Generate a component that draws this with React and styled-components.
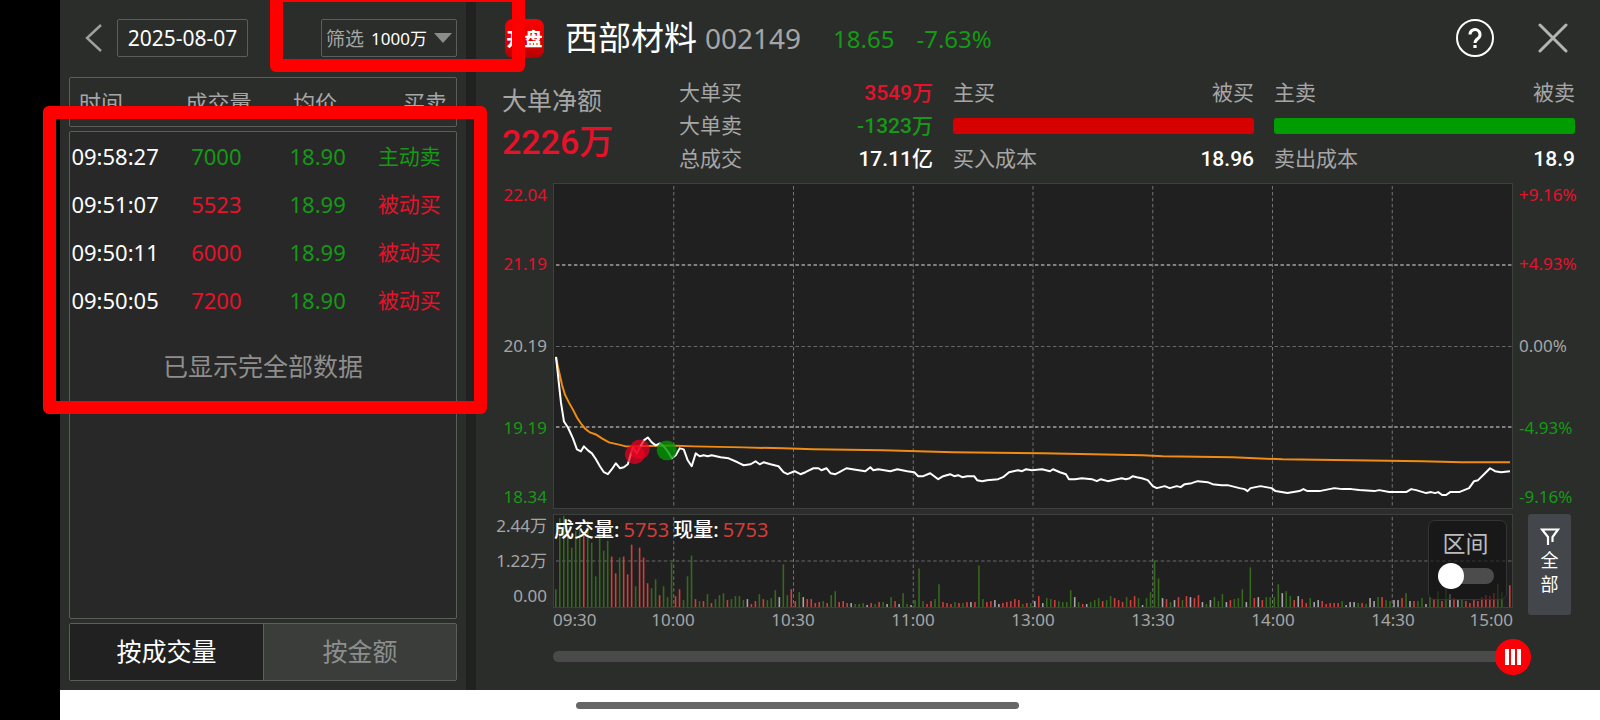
import React from "react";
import styled, { createGlobalStyle } from "styled-components";
import { useState } from "react";

const RED = "#e8112a";
const GREEN = "#149a14";
const GREY = "#a6a6a6";

const trades = [
  { time: "09:58:27", volume: "7000", price: "18.90", side: "主动卖", up: false },
  { time: "09:51:07", volume: "5523", price: "18.99", side: "被动买", up: true },
  { time: "09:50:11", volume: "6000", price: "18.99", side: "被动买", up: true },
  { time: "09:50:05", volume: "7200", price: "18.90", side: "被动买", up: true },
];

const priceTicks = [
  { price: "22.04", percent: "+9.16%", color: RED },
  { price: "21.19", percent: "+4.93%", color: RED },
  { price: "20.19", percent: "0.00%", color: GREY },
  { price: "19.19", percent: "-4.93%", color: GREEN },
  { price: "18.34", percent: "-9.16%", color: GREEN },
];

const timeTicks = [
  "09:30",
  "10:00",
  "10:30",
  "11:00",
  "13:00",
  "13:30",
  "14:00",
  "14:30",
  "15:00",
];

const gridX = [120, 240, 360, 480, 600, 720, 840];

// x,y pairs on a 960 x 326 canvas
const priceLine =
  "2,174 7,220 10,239 14,245 19,256 23,267 27,269 30,264 34,268 38,271 42,277 46,284 50,290 54,292 58,287 62,281 66,286 70,285 74,282 79,265 83,271 86,265 90,258 94,255 98,260 102,263 106,261 110,264 114,269 118,276 122,273 126,266 130,267 134,278 138,284 142,271 146,274 150,273 154,274 158,273 167,275 175,276 184,280 190,283 197,282 202,279 206,282 210,280 217,282 225,284 230,290 234,292 241,289 247,292 252,290 " +
  "254,289 260,286 265,286 268,288 273,286 277,291 282,292 286,290 293,286 299,287 312,289 317,285 320,288 325,287 337,289 344,287 354,289 361,290 365,294 370,294 377,291 381,294 385,297 390,294 397,292 401,294 405,293 409,295 414,294 421,294 424,298 429,299 434,298 445,297 450,295 456,290 465,288 469,289 473,287 479,288 489,287 497,289 500,287 507,290 513,292 516,297 522,297 529,296 539,297 544,299 548,297 555,299 564,297 569,296 573,297 577,296 580,294 584,295 589,296 595,298 600,304 604,306 612,304 617,306 624,304 628,305 632,302 639,301 " +
  "645,299 655,300 660,302 669,303 675,303 687,306 692,307 695,309 698,306 708,304 719,306 723,309 735,311 747,309 751,307 755,309 767,309 782,306 790,307 799,307 807,308 822,309 827,308 837,310 854,310 859,307 864,308 874,311 879,310 883,311 886,310 890,313 894,313 898,310 907,310 917,306 922,299 926,298 934,290 938,286 943,289 949,290 958,289";

const averageLine =
  "2,174 4,184 8,202 11,212 15,220 19,227 23,235 27,241 31,246 36,250 42,252 48,256 55,260 64,262 72,264 80,264 115,263 140,264 190,265 230,266 260,267 330,268 400,270 490,271 590,273 610,274 680,275 730,277 800,278 870,279 910,280 958,280";

// colour letter (g fall, r rise, w flat) and height of every minute bar
const volumeBars = (
  "g18 g90 g92 g76 g60 g77 g78 r72 g87 g65 g31 g88 g57 g67 r51 r34 g50 r51 r33 r63 g21 r60 r50 r24 g19 g28 r12 g21 g10 g45 " +
  "r11 r18 g7 g31 g52 r8 g6 r6 g13 r4 g8 g12 g14 r7 g8 g11 g11 g7 w8 r3 r6 g13 r8 g7 g9 g17 w10 g43 g12 r18 " +
  "r6 g15 w10 r8 r8 r4 r5 g6 r4 g12 g16 r5 r6 r4 w4 g3 g3 g4 w2 r4 g3 r5 g5 w3 g10 r6 w3 g14 g3 w2 " +
  "g7 g39 g6 r3 r6 g8 g23 r5 r4 r3 g5 r4 g4 r5 w5 r5 g42 g8 r5 r6 w7 w3 r4 r5 r6 r8 r7 g3 r4 g4 " +
  "w6 r11 w4 g9 g8 r7 g6 g5 g5 g17 w10 g5 r3 w3 g5 g7 g9 r6 g7 g11 r9 r7 r5 g10 r7 r11 g9 w2 g9 g15 " +
  "g47 g29 w9 r8 g5 w7 r10 g7 r11 w10 r9 r12 w5 g3 w7 g10 g6 g13 w5 r7 g8 g9 g18 w5 g40 r9 w10 r7 g10 g10 " +
  "g10 g23 w14 g16 g11 r7 w11 r8 r4 g9 w5 w7 r6 r3 r4 r4 r4 g6 w2 w5 w5 g4 r4 g3 w9 w6 g10 r10 g7 g6 " +
  "w7 w7 r9 g14 w6 r6 g6 g9 w3 g10 r8 g16 r6 g22 w13 r9 w7 g8 r6 r4 r7 r6 r10 r12 r11 r14 g23 g15 g0 r22"
).split(" ");

const barColors = { g: "#35691d", r: "#d23e39", w: "#a6a6a6" };

const stats = [
  { label: "大单买", value: "3549万", color: RED },
  { label: "大单卖", value: "-1323万", color: GREEN },
  { label: "总成交", value: "17.11亿", color: "#fff" },
];

function TradePanel() {
  const [mode, setMode] = useState("volume");

  return (
    <Sidebar>
      <SidebarTop>
        <IconButton aria-label="返回">
          <svg width="18" height="30" viewBox="0 0 18 30" fill="none">
            <path d="M16 2 2 15l14 13" stroke="#a0a0a0" strokeWidth="2.4" />
          </svg>
        </IconButton>
        <DateButton>2025-08-07</DateButton>
        <FilterBox>
          <label htmlFor="filter">筛选</label>
          <FilterSelect id="filter" defaultValue="1000">
            <option value="1000">1000万</option>
          </FilterSelect>
          <svg width="18" height="10" viewBox="0 0 18 10">
            <path d="M0 0h18L9 10z" fill="#8c8c8c" />
          </svg>
        </FilterBox>
      </SidebarTop>
      <TradeTable>
        <TradeHead>
          <TradeRow>
            <th>时间</th>
            <th>成交量</th>
            <th>均价</th>
            <th>买卖</th>
          </TradeRow>
        </TradeHead>
        <TradeBody>
          {trades.map((trade) => (
            <TradeRow key={trade.time}>
              <TradeCell>{trade.time}</TradeCell>
              <TradeCell $color={trade.up ? RED : GREEN}>{trade.volume}</TradeCell>
              <TradeCell $color={GREEN}>{trade.price}</TradeCell>
              <SideCell $color={trade.up ? RED : GREEN}>{trade.side}</SideCell>
            </TradeRow>
          ))}
          <EndRow>
            <EndCell colSpan={4}>已显示完全部数据</EndCell>
          </EndRow>
        </TradeBody>
      </TradeTable>
      <Tabs>
        <TabButton $active={mode === "volume"} onClick={() => setMode("volume")}>
          按成交量
        </TabButton>
        <TabButton $active={mode === "amount"} onClick={() => setMode("amount")}>
          按金额
        </TabButton>
      </Tabs>
    </Sidebar>
  );
}

function Header() {
  return (
    <HeaderRow>
      <Logo>开盘</Logo>
      <StockName>西部材料</StockName>
      <StockCode>002149</StockCode>
      <Quote>18.65</Quote>
      <Quote>-7.63%</Quote>
      <HeaderActions>
        <IconButton aria-label="帮助">
          <svg width="38" height="38" viewBox="0 0 38 38" fill="none" stroke="#fff">
            <circle cx="19" cy="19" r="18" strokeWidth="2" />
            <path d="M14 15.5a5 5 0 1 1 8 4c-2 1.5-3 2.3-3 4.5" strokeWidth="3" />
            <path d="M19 26v3" strokeWidth="3.2" />
          </svg>
        </IconButton>
        <IconButton aria-label="关闭">
          <svg width="30" height="30" viewBox="0 0 30 30" fill="none">
            <path
              d="M2 2l26 26M28 2 2 28"
              stroke="#b4b4b4"
              strokeWidth="3"
              strokeLinecap="round"
            />
          </svg>
        </IconButton>
      </HeaderActions>
    </HeaderRow>
  );
}

function CostBlock(props) {
  const { active, passive, color, label, value } = props;
  return (
    <StatColumn>
      <StatRow>
        <span>{active}</span>
        <span>{passive}</span>
      </StatRow>
      <StatRow>
        <RatioBar $color={color} />
      </StatRow>
      <StatRow>
        <span>{label}</span>
        <StatValue $color="#fff">{value}</StatValue>
      </StatRow>
    </StatColumn>
  );
}

function Summary() {
  return (
    <SummaryGrid>
      <NetAmount>
        <NetLabel>大单净额</NetLabel>
        <NetValue>2226万</NetValue>
      </NetAmount>
      <StatColumn>
        {stats.map((item) => (
          <StatRow key={item.label}>
            <span>{item.label}</span>
            <StatValue $color={item.color}>{item.value}</StatValue>
          </StatRow>
        ))}
      </StatColumn>
      <CostBlock active="主买" passive="被买" color="#d60000" label="买入成本" value="18.96" />
      <CostBlock active="主卖" passive="被卖" color="#009c00" label="卖出成本" value="18.9" />
    </SummaryGrid>
  );
}

function PriceChart() {
  return (
    <ChartSvg viewBox="0 0 960 326" preserveAspectRatio="none">
      {gridX.map((x) => (
        <path key={x} d={`M${x} 2V326`} stroke="#747474" strokeDasharray="3.5 2.5" />
      ))}
      <path d="M2 163.5H960" stroke="#6a6a6a" strokeDasharray="3.5 2.5" />
      <path d="M2 81.5H960M2 244.5H960" stroke="#e4e4e4" strokeDasharray="3.5 2.5" />
      <polyline points={averageLine} fill="none" stroke="#f08c14" strokeWidth="2" />
      <polyline
        points={priceLine}
        fill="none"
        stroke="#fff"
        strokeWidth="2"
        strokeLinejoin="round"
      />
      <g fill="#f00020" fillOpacity="0.7">
        <circle cx="81" cy="272" r="10" />
        <circle cx="86" cy="267" r="10" />
      </g>
      <circle cx="113" cy="268" r="10" fill="#009600" fillOpacity="0.8" />
    </ChartSvg>
  );
}

function VolumeChart() {
  return (
    <ChartSvg viewBox="0 0 960 93" preserveAspectRatio="none">
      {gridX.map((x) => (
        <path key={x} d={`M${x} 2V93`} stroke="#747474" strokeDasharray="3.5 2.5" />
      ))}
      <path d="M2 46.5H960" stroke="#6a6a6a" strokeDasharray="3.5 2.5" />
      {volumeBars.map((bar, index) => {
        const height = Number(bar.slice(1));
        return (
          <rect
            key={index}
            x={1 + index * 4}
            y={93 - height}
            width="1.6"
            height={height}
            fill={barColors[bar[0]]}
          />
        );
      })}
    </ChartSvg>
  );
}

function ChartArea() {
  return (
    <ChartGrid>
      <PriceAxis $align="right">
        {priceTicks.map((tick) => (
          <AxisLabel key={tick.price} $color={tick.color}>
            {tick.price}
          </AxisLabel>
        ))}
      </PriceAxis>
      <Plot>
        <PriceChart />
      </Plot>
      <PriceAxis $align="left">
        {priceTicks.map((tick) => (
          <AxisLabel key={tick.percent} $color={tick.color}>
            {tick.percent}
          </AxisLabel>
        ))}
      </PriceAxis>
      <VolumeAxis>
        <AxisLabel>2.44万</AxisLabel>
        <AxisLabel>1.22万</AxisLabel>
        <AxisLabel>0.00</AxisLabel>
      </VolumeAxis>
      <Plot>
        <VolumeChart />
        <Legend>
          <span>成交量:</span>
          <LegendValue>5753</LegendValue>
          <span>现量:</span>
          <LegendValue>5753</LegendValue>
        </Legend>
        <RangePanel>
          <label htmlFor="range">区间</label>
          <Toggle id="range" type="checkbox" />
        </RangePanel>
      </Plot>
      <AllButton>
        <svg width="20" height="18" viewBox="0 0 20 18" fill="none">
          <path d="M8 17V9L2 1.5h16L12.5 9v5" stroke="#fff" strokeWidth="2.2" />
        </svg>
        <span>全</span>
        <span>部</span>
      </AllButton>
      <TimeAxis>
        {timeTicks.map((tick) => (
          <span key={tick}>{tick}</span>
        ))}
      </TimeAxis>
      <SliderWrapper>
        <Slider type="range" min="0" max="100" defaultValue="100" aria-label="时间" />
      </SliderWrapper>
    </ChartGrid>
  );
}

export default function App() {
  return (
    <>
      <GlobalStyle />
      <Page>
        <Content>
          <TradePanel />
          <Main>
            <Header />
            <Summary />
            <ChartArea />
          </Main>
        </Content>
        <HomeBar>
          <HomeHandle />
        </HomeBar>
        <FilterMark />
        <TradesMark />
      </Page>
    </>
  );
}

const GlobalStyle = createGlobalStyle`
  * {
    box-sizing: border-box;
  }
  body {
    margin: 0;
    background: #000;
    font-family: "Noto Sans", "Noto Sans CJK SC", sans-serif;
    color: #fff;
  }
  button, select, input {
    font: inherit;
    color: inherit;
    margin: 0;
    padding: 0;
    border: none;
    background: none;
  }
`;

const Page = styled.div`
  position: relative;
  display: flex;
  flex-direction: column;
  min-height: 100vh;
  padding-left: 60px;
  overflow: hidden;
`;

const Content = styled.div`
  flex: 1;
  display: grid;
  grid-template-columns: 416px 1fr;
  background: #2b2d2b;
`;

const Sidebar = styled.aside`
  display: flex;
  flex-direction: column;
  gap: 4px;
  padding: 0 9px 9px 9px;
  border-right: 10px solid #212121;
`;

const SidebarTop = styled.div`
  display: flex;
  align-items: center;
  height: 73px;
  padding: 3px 0 0 16px;
`;

const IconButton = styled.button`
  display: flex;
  align-items: center;
`;

const DateButton = styled.button`
  width: 131px;
  height: 38px;
  margin-left: 14px;
  border: 1px solid #5c5e5c;
  border-radius: 2px;
  font-size: 21px;
`;

const FilterBox = styled.div`
  display: flex;
  align-items: center;
  justify-content: space-between;
  width: 136px;
  height: 38px;
  margin-left: auto;
  padding: 0 4px;
  border: 1px solid #5c5e5c;
  border-radius: 2px;
  color: ${GREY};
  font-size: 19px;
`;

const FilterSelect = styled.select`
  appearance: none;
  color: #fff;
  font-size: 17px;
`;

const TradeTable = styled.table`
  flex: 1;
  display: flex;
  flex-direction: column;
  gap: 4px;
`;

const TradeHead = styled.thead`
  display: block;
  padding: 0 9px;
  border: 1px solid #5c5e5c;
  border-radius: 2px;
`;

const TradeBody = styled.tbody`
  flex: 1;
  display: block;
  border: 1px solid #5c5e5c;
  border-radius: 2px;
  background: #282828;
`;

const TradeRow = styled.tr`
  display: grid;
  grid-template-columns: 90fr 112fr 90fr 93fr;
  text-align: center;
  line-height: 48px;

  th {
    padding: 0;
    color: ${GREY};
    font-size: 22px;
    font-weight: 400;
  }
  th:first-child {
    text-align: left;
  }
  th:last-child {
    text-align: right;
  }
`;

const TradeCell = styled.td`
  padding: 0;
  color: ${(props) => props.$color || "#fff"};
  font-size: 22px;
  white-space: nowrap;
`;

const SideCell = styled(TradeCell)`
  font-size: 21px;
`;

const EndRow = styled.tr`
  display: flex;
  justify-content: center;
`;

const EndCell = styled.td`
  padding: 0;
  color: #8e8e8e;
  font-size: 25px;
  line-height: 84px;
`;

const Tabs = styled.div`
  display: grid;
  grid-template-columns: 1fr 1fr;
  height: 58px;
  border: 1px solid #5c5e5c;
  border-radius: 2px;
`;

const TabButton = styled.button`
  padding-bottom: 4px;
  background: ${(props) => (props.$active ? "#212121" : "#3b3d3b")};
  color: ${(props) => (props.$active ? "#fff" : "#8e8e8e")};
  font-size: 25px;

  & + & {
    border-left: 1px solid #5c5e5c;
  }
`;

const Main = styled.main`
  display: flex;
  flex-direction: column;
  min-width: 0;
`;

const HeaderRow = styled.header`
  display: flex;
  align-items: center;
  height: 76px;
  padding: 0 32px 0 29px;
`;

const Logo = styled.div`
  display: flex;
  align-items: center;
  justify-content: center;
  width: 39px;
  height: 39px;
  border-radius: 8px;
  background: linear-gradient(#f00, #b80000);
  font-size: 18px;
  font-weight: 900;
`;

const StockName = styled.h1`
  margin: 0 0 0 21px;
  font-size: 33px;
  font-weight: 400;
  line-height: 40px;
`;

const StockCode = styled.span`
  margin-left: 8px;
  color: ${GREY};
  font-size: 28px;
`;

const Quote = styled.span`
  margin-left: 22px;
  color: ${GREEN};
  font-size: 24px;

  ${StockCode} + & {
    margin-left: 32px;
  }
`;

const HeaderActions = styled.div`
  display: flex;
  align-items: center;
  gap: 44px;
  margin-left: auto;
`;

const SummaryGrid = styled.section`
  display: grid;
  grid-template-columns: 157fr 254fr 301fr 301fr;
  gap: 20px;
  padding: 0 25px 0 26px;
`;

const NetAmount = styled.div`
  padding-top: 4px;
`;

const NetLabel = styled.div`
  color: ${GREY};
  font-size: 25px;
  line-height: 40px;
`;

const NetValue = styled.div`
  color: ${RED};
  font-family: Roboto, "Noto Sans CJK SC", sans-serif;
  font-size: 34px;
  font-weight: 500;
  line-height: 44px;
`;

const StatColumn = styled.div`
  color: ${GREY};
  font-size: 21px;
  line-height: 32px;
`;

const StatRow = styled.div`
  display: flex;
  align-items: baseline;
  justify-content: space-between;
  height: 33px;
`;

const StatValue = styled.span`
  color: ${(props) => props.$color};
  font-family: Roboto, "Noto Sans CJK SC", sans-serif;
  font-weight: 500;
`;

const RatioBar = styled.div`
  flex: 1;
  align-self: center;
  height: 16px;
  border-radius: 3px;
  background: ${(props) => props.$color};
`;

const ChartGrid = styled.section`
  flex: 1;
  display: grid;
  grid-template-columns: 71px 1fr 81px;
  grid-template-rows: 1fr 94px 14px 42px;
  gap: 5px 6px;
  padding: 8px 0 16px;
  color: ${GREY};
  font-size: 17px;
`;

const PriceAxis = styled.div`
  display: grid;
  grid-template-rows: 40fr 82fr 82fr 82fr 40fr;
  align-items: center;
  text-align: ${(props) => props.$align};

  & > :first-child {
    align-self: start;
  }
  & > :last-child {
    align-self: end;
  }
`;

const AxisLabel = styled.span`
  color: ${(props) => props.$color || GREY};
  line-height: 24px;
`;

const VolumeAxis = styled.div`
  display: flex;
  flex-direction: column;
  justify-content: space-between;
  text-align: right;
`;

const Plot = styled.div`
  position: relative;
  min-height: 0;
  border: 1px solid #3d403d;
  background: #202020;
`;

const ChartSvg = styled.svg`
  position: absolute;
  width: 100%;
  height: 100%;
`;

const Legend = styled.div`
  position: absolute;
  top: 1px;
  left: 0;
  display: flex;
  gap: 4px;
  color: #fff;
  font-size: 20px;
  font-weight: 500;
  line-height: 28px;
`;

const LegendValue = styled.span`
  color: #d23c38;
  font-weight: 400;
`;

const RangePanel = styled.div`
  position: absolute;
  top: 5px;
  right: 5px;
  display: flex;
  flex-direction: column;
  align-items: center;
  gap: 6px;
  width: 79px;
  height: 80px;
  padding: 7px 4px 0 0;
  border: 1px solid #343434;
  border-radius: 7px;
  background: rgba(20, 20, 20, 0.6);
  color: #bcbcbc;
  font-size: 23px;
  line-height: 30px;
`;

const Toggle = styled.input`
  appearance: none;
  display: flex;
  align-items: center;
  width: 56px;
  height: 16px;
  margin-top: 4px;
  border-radius: 8px;
  background: #4c4c4c;

  &::before {
    content: "";
    flex: 0 0 26px;
    height: 26px;
    border-radius: 50%;
    background: #fff;
  }
  &:checked {
    justify-content: flex-end;
  }
`;

const AllButton = styled.button`
  grid-row: 2 / span 2;
  grid-column: 3;
  display: flex;
  flex-direction: column;
  align-items: center;
  width: 43px;
  height: 101px;
  margin-left: 9px;
  padding-top: 14px;
  border-radius: 3px;
  background: #43464b;
  color: #fff;
  font-size: 18px;
  line-height: 24px;

  svg {
    margin-bottom: 2px;
  }
`;

const TimeAxis = styled.div`
  grid-row: 3;
  grid-column: 2;
  display: grid;
  grid-template-columns: 1fr repeat(7, 2fr) 1fr;
  text-align: center;
  line-height: 14px;

  & > :first-child {
    text-align: left;
  }
  & > :last-child {
    text-align: right;
  }
`;

const SliderWrapper = styled.div`
  grid-row: 4;
  grid-column: 2;
  align-self: end;
  margin-right: -18px;
`;

const Slider = styled.input`
  appearance: none;
  display: block;
  width: 100%;
  height: 36px;

  &::-webkit-slider-runnable-track {
    height: 11px;
    border-radius: 6px;
    background: #4a4a4a;
  }
  &::-webkit-slider-thumb {
    appearance: none;
    width: 36px;
    height: 36px;
    margin-top: -12px;
    border-radius: 50%;
    background:
      linear-gradient(90deg, #fff 4px, transparent 4px 6px, #fff 6px 10px, transparent 10px 12px, #fff 12px)
        center / 16px 16px no-repeat,
      #fb0007;
  }
`;

const HomeBar = styled.footer`
  display: flex;
  align-items: center;
  justify-content: center;
  height: 30px;
  padding-right: 66px;
  background: #fff;
`;

const HomeHandle = styled.div`
  width: 443px;
  height: 7px;
  border-radius: 4px;
  background: #666;
`;

const Mark = styled.div`
  position: absolute;
  border: 13px solid #f00;
  border-radius: 6px;
  pointer-events: none;
`;

const FilterMark = styled(Mark)`
  top: -11px;
  left: 270px;
  width: 255px;
  height: 83px;
`;

const TradesMark = styled(Mark)`
  top: 106px;
  left: 43px;
  width: 444px;
  height: 308px;
`;
